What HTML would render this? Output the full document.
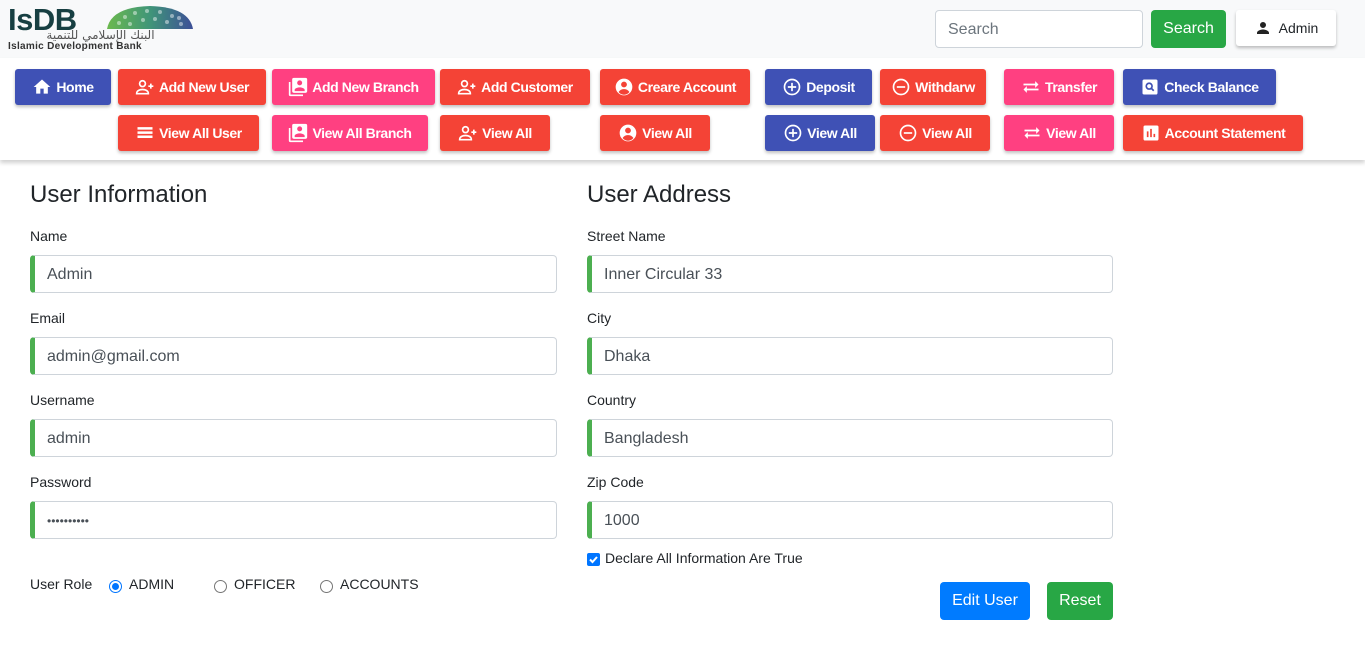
<!DOCTYPE html>
<html><head><meta charset="utf-8"><style>
*{box-sizing:border-box;margin:0;padding:0}
body{width:1365px;height:652px;overflow:hidden;background:#fff;font-family:"Liberation Sans",sans-serif;position:relative;color:#212529}
.hdr{position:absolute;left:0;top:0;width:1365px;height:58px;background:#f8f9fa;box-shadow:0 2px 4px rgba(0,0,0,.15)}
.nav{position:absolute;left:0;top:58px;width:1365px;height:102px;background:#fff;box-shadow:0 3px 4px rgba(0,0,0,.18)}
.b{position:absolute;height:36px;border-radius:3px;color:#fff;font-weight:bold;font-size:14px;letter-spacing:-0.4px;display:flex;align-items:center;justify-content:center;gap:4px;box-shadow:0 2px 3px rgba(0,0,0,.25);white-space:nowrap}
.b svg{width:20px;height:20px;flex:none}
.bl{background:#3f51b5}.rd{background:#f44336}.pk{background:#ff4081}
.a{position:absolute;font-size:14px;color:#212529}
.h{position:absolute;font-size:24px;color:#212529}
.in{position:absolute;height:38px;border:1px solid #ced4da;border-left:5px solid #4caf50;border-radius:4px;padding-left:12px;padding-top:2px;font-size:16px;color:#495057;display:flex;align-items:center}
.rad{position:absolute;width:13px;height:13px;border:1px solid #767676;border-radius:50%;background:#fff}
</style></head><body>
<div class="hdr"></div>
<div style="position:absolute;left:8px;top:2px;font-size:31px;font-weight:bold;color:#173f42;letter-spacing:-0.5px">IsDB</div>
<svg style="position:absolute;left:105px;top:5px" width="90" height="25" viewBox="0 0 90 25">
<defs><linearGradient id="g" x1="0" x2="1"><stop offset="0" stop-color="#5cb23a"/><stop offset=".5" stop-color="#2b8a6a"/><stop offset="1" stop-color="#283c8c"/></linearGradient></defs>
<path d="M2 24 Q6 2 45 1 Q84 2 88 24 Z" fill="url(#g)" opacity=".9"/>
<g fill="#fff" opacity=".45"><circle cx="14" cy="18" r="2"/><circle cx="20" cy="12" r="2"/><circle cx="30" cy="8" r="2"/><circle cx="42" cy="6" r="2"/><circle cx="55" cy="7" r="2"/><circle cx="67" cy="11" r="2"/><circle cx="25" cy="19" r="2"/><circle cx="38" cy="15" r="2"/><circle cx="50" cy="14" r="2"/><circle cx="62" cy="17" r="2"/><circle cx="76" cy="19" r="2"/><circle cx="74" cy="13" r="2"/></g></svg>
<div style="position:absolute;left:8px;top:29px;width:185px;text-align:center;font-size:12px;color:#555;font-family:'DejaVu Sans',sans-serif;line-height:12px;letter-spacing:2px">البنك الإسلامي للتنمية</div>
<div style="position:absolute;left:8px;top:41px;font-size:10px;font-weight:bold;color:#333;letter-spacing:0.3px">Islamic Development Bank</div>
<div style="position:absolute;left:935px;top:10px;width:208px;height:38px;border:1px solid #ced4da;border-radius:4px;background:#fff;padding-left:12px;font-size:16px;color:#6c757d;line-height:38px">Search</div>
<div style="position:absolute;left:1151px;top:10px;width:75px;height:38px;border-radius:4px;background:#28a745;color:#fff;font-size:16px;line-height:38px;text-align:center">Search</div>
<div style="position:absolute;left:1236px;top:10px;width:100px;height:36px;border-radius:3px;background:#fff;box-shadow:0 2px 3px rgba(0,0,0,.25);font-size:14px;display:flex;align-items:center;justify-content:center;gap:7px"><svg width="18" height="18" viewBox="0 0 24 24"><path fill="#222" d="M12 12a4 4 0 1 0 0-8 4 4 0 0 0 0 8zm0 2c-3 0-8 1.5-8 4.5V20h16v-1.5c0-3-5-4.5-8-4.5z"/></svg>Admin</div>
<div class="nav"></div>
<svg width="0" height="0" style="position:absolute"><defs>
<symbol id="home" viewBox="0 0 24 24"><path fill="#fff" d="M10 20v-6h4v6h5v-8h3L12 3 2 12h3v8z"/></symbol>
<symbol id="uadd" viewBox="0 0 24 24"><g fill="none" stroke="#fff" stroke-width="2"><circle cx="9" cy="8" r="3.5"/><path d="M2 20c0-4 4-5 7-5s7 1 7 5z"/><path d="M19 8v6M16 11h6"/></g></symbol>
<symbol id="br" viewBox="0 0 24 24"><path fill="#fff" d="M3 6H1v15a2 2 0 0 0 2 2h15v-2H3zM21 1H7a2 2 0 0 0-2 2v14a2 2 0 0 0 2 2h14a2 2 0 0 0 2-2V3a2 2 0 0 0-2-2zm-7 3a3 3 0 1 1 0 6 3 3 0 0 1 0-6zm6 13H8v-1.5c0-2 4-3 6-3s6 1 6 3z"/></symbol>
<symbol id="acc" viewBox="0 0 24 24"><circle cx="12" cy="12" r="10" fill="#fff"/><circle cx="12" cy="9" r="3.5" fill="#f44336"/><path d="M5.5 18c1.5-2.5 4-3.5 6.5-3.5s5 1 6.5 3.5a8 8 0 0 1-13 0z" fill="#f44336"/></symbol>
<symbol id="plus" viewBox="0 0 24 24"><g fill="none" stroke="#fff" stroke-width="2"><circle cx="12" cy="12" r="9"/><path d="M12 7v10M7 12h10"/></g></symbol>
<symbol id="minus" viewBox="0 0 24 24"><g fill="none" stroke="#fff" stroke-width="2"><circle cx="12" cy="12" r="9"/><path d="M7 12h10"/></g></symbol>
<symbol id="tr" viewBox="0 0 24 24"><path fill="#fff" d="M7 11l-4 4 4 4v-3h14v-2H7zm14-2l-4-4v3H3v2h14v3z"/></symbol>
<symbol id="cb" viewBox="0 0 24 24"><rect x="3" y="3" width="18" height="18" rx="2" fill="#fff"/><circle cx="11" cy="11" r="3.5" fill="none" stroke="#3f51b5" stroke-width="2"/><path d="M13.5 13.5l3 3" stroke="#3f51b5" stroke-width="2"/></symbol>
<symbol id="list" viewBox="0 0 24 24"><path fill="#fff" d="M3 5h18v3H3zm0 5h18v3H3zm0 5h18v3H3z"/></symbol>
<symbol id="st" viewBox="0 0 24 24"><rect x="3" y="3" width="18" height="18" rx="2" fill="#fff"/><path fill="#f44336" d="M7 10h2v7H7zm4-3h2v10h-2zm4 6h2v4h-2z"/></symbol>
</defs></svg>
<div class="b bl" style="left:15px;top:69px;width:96px"><svg><use href="#home"/></svg>Home</div>
<div class="b rd" style="left:118px;top:69px;width:148px"><svg><use href="#uadd"/></svg>Add New User</div>
<div class="b pk" style="left:272px;top:69px;width:163px"><svg><use href="#br"/></svg>Add New Branch</div>
<div class="b rd" style="left:440px;top:69px;width:150px"><svg><use href="#uadd"/></svg>Add Customer</div>
<div class="b rd" style="left:600px;top:69px;width:150px"><svg><use href="#acc"/></svg>Creare Account</div>
<div class="b bl" style="left:765px;top:69px;width:107px"><svg><use href="#plus"/></svg>Deposit</div>
<div class="b rd" style="left:880px;top:69px;width:106px"><svg><use href="#minus"/></svg>Withdarw</div>
<div class="b pk" style="left:1004px;top:69px;width:110px"><svg><use href="#tr"/></svg>Transfer</div>
<div class="b bl" style="left:1123px;top:69px;width:153px"><svg><use href="#cb"/></svg>Check Balance</div>
<div class="b rd" style="left:118px;top:115px;width:141px"><svg><use href="#list"/></svg>View All User</div>
<div class="b pk" style="left:272px;top:115px;width:156px"><svg><use href="#br"/></svg>View All Branch</div>
<div class="b rd" style="left:440px;top:115px;width:110px"><svg><use href="#uadd"/></svg>View All</div>
<div class="b rd" style="left:600px;top:115px;width:110px"><svg><use href="#acc"/></svg>View All</div>
<div class="b bl" style="left:765px;top:115px;width:110px"><svg><use href="#plus"/></svg>View All</div>
<div class="b rd" style="left:880px;top:115px;width:110px"><svg><use href="#minus"/></svg>View All</div>
<div class="b pk" style="left:1004px;top:115px;width:110px"><svg><use href="#tr"/></svg>View All</div>
<div class="b rd" style="left:1123px;top:115px;width:180px"><svg><use href="#st"/></svg>Account Statement</div>

<div class="h" style="left:30px;top:181px">User Information</div>
<div class="h" style="left:587px;top:181px">User Address</div>

<div class="a" style="left:30px;top:228px">Name</div><div class="in" style="left:30px;top:255px;width:527px">Admin</div>
<div class="a" style="left:30px;top:310px">Email</div><div class="in" style="left:30px;top:337px;width:527px">admin@gmail.com</div>
<div class="a" style="left:30px;top:392px">Username</div><div class="in" style="left:30px;top:419px;width:527px">admin</div>
<div class="a" style="left:30px;top:474px">Password</div><div class="in" style="left:30px;top:501px;width:527px;font-size:12px;letter-spacing:0px">••••••••••</div>

<div class="a" style="left:587px;top:228px">Street Name</div><div class="in" style="left:587px;top:255px;width:526px">Inner Circular 33</div>
<div class="a" style="left:587px;top:310px">City</div><div class="in" style="left:587px;top:337px;width:526px">Dhaka</div>
<div class="a" style="left:587px;top:392px">Country</div><div class="in" style="left:587px;top:419px;width:526px">Bangladesh</div>
<div class="a" style="left:587px;top:474px">Zip Code</div><div class="in" style="left:587px;top:501px;width:526px">1000</div>

<div style="position:absolute;left:587px;top:553px;width:13px;height:13px;background:#0075ff;border-radius:2px"><svg width="13" height="13" viewBox="0 0 13 13"><path d="M3 6.5l2.5 2.5 4.5-5" stroke="#fff" stroke-width="2" fill="none"/></svg></div>
<div class="a" style="left:605px;top:550px">Declare All Information Are True</div>

<div class="a" style="left:30px;top:576px">User Role</div>
<div class="rad" style="left:109px;top:580px;border:1px solid #0075ff"><div style="margin:2px;width:7px;height:7px;border-radius:50%;background:#0075ff"></div></div>
<div class="a" style="left:129px;top:576px">ADMIN</div>
<div class="rad" style="left:214px;top:580px"></div><div class="a" style="left:234px;top:576px">OFFICER</div>
<div class="rad" style="left:320px;top:580px"></div><div class="a" style="left:340px;top:576px">ACCOUNTS</div>

<div style="position:absolute;left:940px;top:582px;width:90px;height:38px;background:#007bff;border-radius:4px;color:#fff;font-size:16px;line-height:38px;text-align:center">Edit User</div>
<div style="position:absolute;left:1047px;top:582px;width:66px;height:38px;background:#28a745;border-radius:4px;color:#fff;font-size:16px;line-height:38px;text-align:center">Reset</div>
</body></html>
